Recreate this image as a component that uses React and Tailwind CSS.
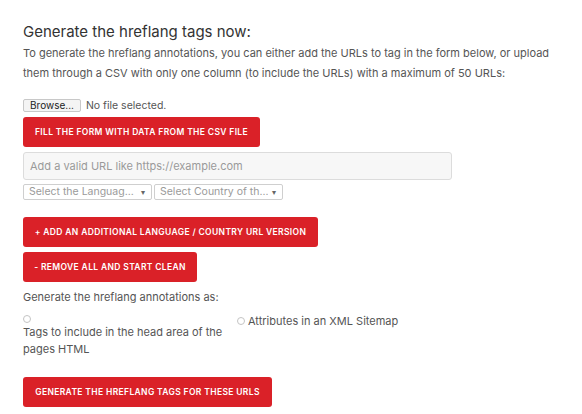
import { useState } from 'react';

const font = { fontFamily: 'Inter, "Open Sans", sans-serif' };

function RedButton({ children, className = '' }) {
  return (
    <button
      className={`block bg-[#da2128] text-white rounded-[3px] text-[8.5px] font-semibold tracking-[0.35px] uppercase whitespace-nowrap text-center h-[30px] ${className}`}
    >
      {children}
    </button>
  );
}

function Select({ label }) {
  return (
    <div className="w-[129px] h-[16px] border border-[#cfcfcf] rounded-[2px] bg-white flex items-center justify-between pl-[5px] pr-[6px] text-[10.5px] text-[#9a9a9a]">
      <span className="whitespace-nowrap overflow-hidden">{label}</span>
      <span className="text-[8px] leading-none text-[#666] ml-1">▾</span>
    </div>
  );
}

export default function App() {
  const [mode, setMode] = useState(null);

  return (
    <div className="w-[582px] h-[414px] bg-white overflow-hidden" style={font}>
      <div className="pl-[23px] pt-[22px]">
        {/* Heading */}
        <h2 className="text-[15px] leading-[20px] text-[#333]">Generate the hreflang tags now:</h2>
        <p className="mt-[1px] text-[11px] leading-[20px] text-[#555] w-[545px]">
          To generate the hreflang annotations, you can either add the URLs to tag in the form below, or upload
          them through a CSV with only one column (to include the URLs) with a maximum of 50 URLs:
        </p>

        {/* File input */}
        <div className="mt-[16px] flex items-center gap-[5px] h-[13px]">
          <span className="h-[13px] px-[6px] border border-[#c8c8c8] rounded-[2px] bg-[#f4f4f4] text-[10px] leading-[11px] text-[#222]">
            Browse...
          </span>
          <span className="text-[10.5px] text-[#555]">No file selected.</span>
        </div>

        <RedButton className="mt-[5px] w-[237px]">Fill the form with data from the CSV file</RedButton>

        {/* URL input */}
        <div className="mt-[5px] w-[429px] h-[28px] border border-[#dcdcdc] rounded-[3px] bg-[#f7f7f7] flex items-center px-[6px] text-[11px] text-[#9a9a9a]">
          Add a valid URL like https://example.com
        </div>

        <div className="mt-[4px] flex gap-[2px]">
          <Select label="Select the Languag..." />
          <Select label="Select Country of th..." />
        </div>

        <RedButton className="mt-[17px] w-[295px]">+ Add an additional language / country URL version</RedButton>
        <RedButton className="mt-[5px] w-[174px]">- Remove all and start clean</RedButton>

        <p className="mt-[7px] text-[11px] leading-[17px] text-[#555]">Generate the hreflang annotations as:</p>

        {/* Radio options */}
        <div className="mt-[9px] flex">
          <label className="w-[214px] cursor-pointer" onClick={() => setMode('tags')}>
            <span
              className={`block w-[8px] h-[8px] rounded-full border border-[#c4c4c4] ${mode === 'tags' ? 'bg-[#555]' : 'bg-white'}`}
            />
            <span className="block mt-[1px] text-[11px] leading-[17px] text-[#555]">
              Tags to include in the head area of the pages HTML
            </span>
          </label>
          <label className="flex items-center gap-[3px] h-[14px] mt-[-1px] cursor-pointer" onClick={() => setMode('xml')}>
            <span
              className={`block w-[8px] h-[8px] rounded-full border border-[#c4c4c4] ${mode === 'xml' ? 'bg-[#555]' : 'bg-white'}`}
            />
            <span className="text-[11px] text-[#555]">Attributes in an XML Sitemap</span>
          </label>
        </div>

        <RedButton className="mt-[19px] w-[249px]">Generate the hreflang tags for these URLs</RedButton>
      </div>
    </div>
  );
}
